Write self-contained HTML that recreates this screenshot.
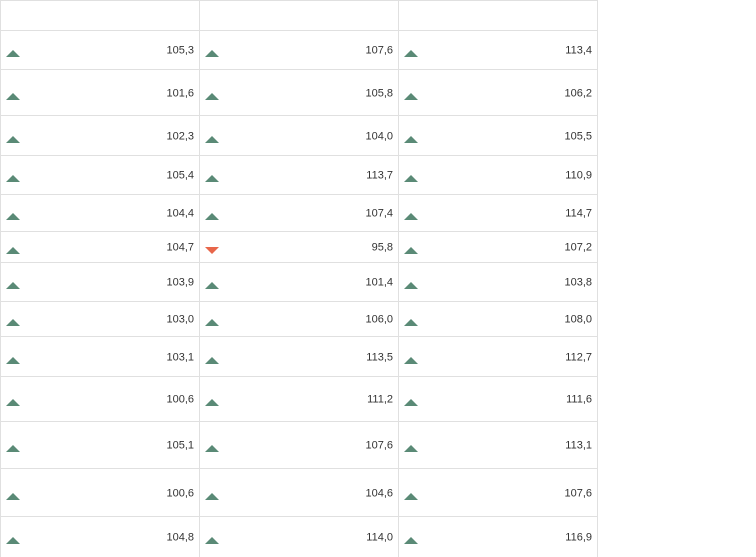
<!DOCTYPE html>
<html><head><meta charset="utf-8"><style>
body{margin:0;background:#fff;width:756px;height:551px;overflow:hidden;font-family:"Liberation Sans",Arial,sans-serif;}
.t{position:absolute;left:0;top:0;width:598px;}
.r{position:relative;display:flex;border-top:1px solid #e0e0e0;box-sizing:border-box;}
.c{position:relative;width:199px;border-left:1px solid #e0e0e0;box-sizing:border-box;}
.c:last-child{width:200px;border-right:1px solid #e0e0e0;}
.v{position:absolute;right:5px;top:50%;transform:translateY(-50%);margin-top:1px;font-size:11px;color:#333;line-height:11px;}
.u,.d{position:absolute;left:5px;top:50%;width:0;height:0;border-left:7px solid transparent;border-right:7px solid transparent;}
.u{border-bottom:7px solid #5a8a76;}
.d{border-top:7px solid #e8664a;}
</style></head><body>
<div class="t">
<div class="r" style="height:30px"><div class="c"></div><div class="c"></div><div class="c"></div></div>
<div class="r" style="height:39px"><div class="c"><i class="u"></i><span class="v">105,3</span></div><div class="c"><i class="u"></i><span class="v">107,6</span></div><div class="c"><i class="u"></i><span class="v">113,4</span></div></div>
<div class="r" style="height:46px"><div class="c"><i class="u"></i><span class="v">101,6</span></div><div class="c"><i class="u"></i><span class="v">105,8</span></div><div class="c"><i class="u"></i><span class="v">106,2</span></div></div>
<div class="r" style="height:40px"><div class="c"><i class="u"></i><span class="v">102,3</span></div><div class="c"><i class="u"></i><span class="v">104,0</span></div><div class="c"><i class="u"></i><span class="v">105,5</span></div></div>
<div class="r" style="height:39px"><div class="c"><i class="u"></i><span class="v">105,4</span></div><div class="c"><i class="u"></i><span class="v">113,7</span></div><div class="c"><i class="u"></i><span class="v">110,9</span></div></div>
<div class="r" style="height:37px"><div class="c"><i class="u"></i><span class="v">104,4</span></div><div class="c"><i class="u"></i><span class="v">107,4</span></div><div class="c"><i class="u"></i><span class="v">114,7</span></div></div>
<div class="r" style="height:31px"><div class="c"><i class="u"></i><span class="v">104,7</span></div><div class="c"><i class="d"></i><span class="v">95,8</span></div><div class="c"><i class="u"></i><span class="v">107,2</span></div></div>
<div class="r" style="height:39px"><div class="c"><i class="u"></i><span class="v">103,9</span></div><div class="c"><i class="u"></i><span class="v">101,4</span></div><div class="c"><i class="u"></i><span class="v">103,8</span></div></div>
<div class="r" style="height:35px"><div class="c"><i class="u"></i><span class="v">103,0</span></div><div class="c"><i class="u"></i><span class="v">106,0</span></div><div class="c"><i class="u"></i><span class="v">108,0</span></div></div>
<div class="r" style="height:40px"><div class="c"><i class="u"></i><span class="v">103,1</span></div><div class="c"><i class="u"></i><span class="v">113,5</span></div><div class="c"><i class="u"></i><span class="v">112,7</span></div></div>
<div class="r" style="height:45px"><div class="c"><i class="u"></i><span class="v">100,6</span></div><div class="c"><i class="u"></i><span class="v">111,2</span></div><div class="c"><i class="u"></i><span class="v">111,6</span></div></div>
<div class="r" style="height:47px"><div class="c"><i class="u"></i><span class="v">105,1</span></div><div class="c"><i class="u"></i><span class="v">107,6</span></div><div class="c"><i class="u"></i><span class="v">113,1</span></div></div>
<div class="r" style="height:48px"><div class="c"><i class="u"></i><span class="v">100,6</span></div><div class="c"><i class="u"></i><span class="v">104,6</span></div><div class="c"><i class="u"></i><span class="v">107,6</span></div></div>
<div class="r" style="height:41px"><div class="c"><i class="u"></i><span class="v">104,8</span></div><div class="c"><i class="u"></i><span class="v">114,0</span></div><div class="c"><i class="u"></i><span class="v">116,9</span></div></div>
</div>
</body></html>
